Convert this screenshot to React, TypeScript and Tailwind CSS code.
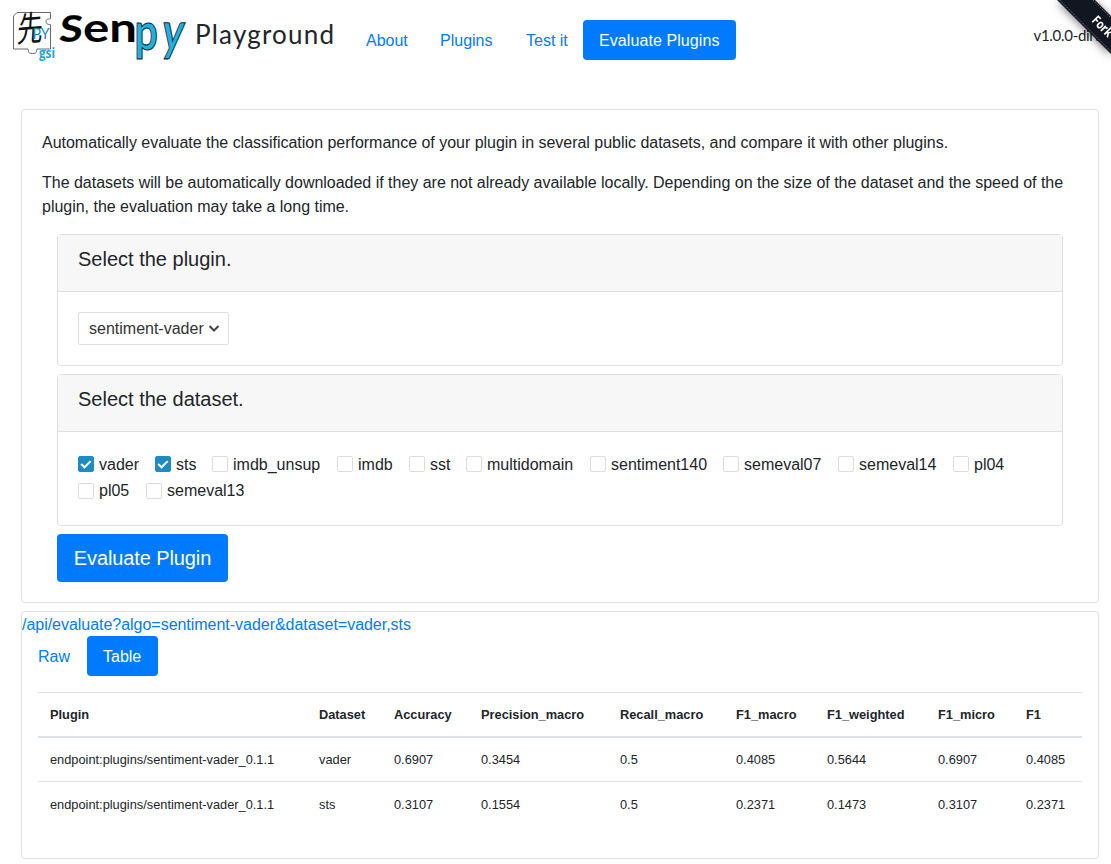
import React from "react";

const navItems = [
  { label: "About", width: "w-[74px]" },
  { label: "Plugins", width: "w-[86px]" },
  { label: "Test it", width: "w-[73px]" },
  { label: "Evaluate Plugins", width: "w-[153px]" },
];

const datasets = [
  { name: "vader", checked: true, width: "w-[61px]" },
  { name: "sts", checked: true, width: "w-[41px]" },
  { name: "imdb_unsup", checked: false, width: "w-[109px]" },
  { name: "imdb", checked: false, width: "w-[56px]" },
  { name: "sst", checked: false, width: "w-[41px]" },
  { name: "multidomain", checked: false, width: "w-[108px]" },
  { name: "sentiment140", checked: false, width: "w-[117px]" },
  { name: "semeval07", checked: false, width: "w-[99px]" },
  { name: "semeval14", checked: false, width: "w-[99px]" },
  { name: "pl04", checked: false, width: "w-[52px]" },
  { name: "pl05", checked: false, width: "w-[52px]" },
  { name: "semeval13", checked: false, width: "w-[99px]" },
];

const columns = [
  { label: "Plugin", width: "w-[269px]" },
  { label: "Dataset", width: "w-[75px]" },
  { label: "Accuracy", width: "w-[87px]" },
  { label: "Precision_macro", width: "w-[139px]" },
  { label: "Recall_macro", width: "w-[116px]" },
  { label: "F1_macro", width: "w-[91px]" },
  { label: "F1_weighted", width: "w-[111px]" },
  { label: "F1_micro", width: "w-[88px]" },
  { label: "F1", width: "w-[68px]" },
];

const rows = [
  ["endpoint:plugins/sentiment-vader_0.1.1", "vader", "0.6907", "0.3454", "0.5", "0.4085", "0.5644", "0.6907", "0.4085"],
  ["endpoint:plugins/sentiment-vader_0.1.1", "sts", "0.3107", "0.1554", "0.5", "0.2371", "0.1473", "0.3107", "0.2371"],
];

function Logo() {
  return (
    <svg className="h-[70px] w-[190px] shrink-0 overflow-visible" viewBox="0 0 190 70">
      <path
        d="M17 12.500H50.500V18.500C49 19.500 46 18.500 46 21.500S49 24.500 50.500 24.500V49H37C36 50.500 38 53.500 32.500 53.500S29 50.500 28 49H13.500V16Z"
        fill="none"
        stroke="#444"
        strokeWidth=".8"
      />
      <text fontSize="28" fontFamily="'Noto Sans CJK JP', sans-serif" fill="#111" transform="matrix(.92 -.07 -.07 1.240 16.500 42)">先</text>
      <text x="32.500" y="39" fontSize="16" fontFamily="Lato, sans-serif" textLength="17" lengthAdjust="spacingAndGlyphs" fill="#1b87b5">PY</text>
      <text x="39" y="58" fontSize="15" fontWeight="700" fontFamily="'Open Sans', sans-serif" textLength="16" lengthAdjust="spacingAndGlyphs" fill="#1ba5da">gsi</text>
      <g fontFamily="Lato, sans-serif" fontWeight="700">
        <text fontSize="36" fill="#000" stroke="#000" strokeWidth=".3" transform="matrix(1.170 -.05 -.1 1 58.500 42)">S</text>
        <text x="83" y="41.500" fontSize="41" textLength="54" lengthAdjust="spacingAndGlyphs" fill="#000">en</text>
        <g fill="#1fb0e6" stroke="#17242c" strokeWidth=".8">
          <text fontSize="40" transform="matrix(1.030 0 0 1.300 134.500 49.500)">p</text>
          <text fontSize="40" transform="matrix(1.020 0 -.16 1.330 160.500 50)">y</text>
        </g>
      </g>
    </svg>
  );
}

function Panel({ title, children, className }: { title: string; children: React.ReactNode; className: string }) {
  return (
    <section className={`mb-2 rounded-[4px] border border-[#dfdfdf] ${className}`}>
      <h2 className="h-[57px] border-b border-[#dfdfdf] bg-[#f7f7f7] px-5 pt-3 text-[20px] leading-6">{title}</h2>
      <div className="px-5">{children}</div>
    </section>
  );
}

export default function App() {
  return (
    <div className="relative h-[864px] overflow-hidden bg-white font-['Liberation_Sans',Arial,sans-serif] text-[16px] leading-6 text-[#212529]">
      <header className="flex h-[109px] items-start">
        <Logo />
        <h1 className="ml-[5px] mt-[18px] w-[155px] whitespace-nowrap font-[Lato] text-[26px] font-normal leading-8 tracking-[1.2px]">Playground</h1>
        <nav className="mt-5 flex">
          {navItems.map(({ label, width }, i) => (
            <a key={label} className={`h-10 whitespace-nowrap rounded-[4px] pl-4 pt-[9px] ${width} ${i === 3 ? "bg-[#007bff] tracking-[0.08px] text-white" : "text-[#007bff]"}`}>
              {label}
            </a>
          ))}
        </nav>
        <span className="ml-auto mr-[4px] mt-[23px] whitespace-nowrap font-[Lato] text-[15px] font-normal tracking-[-0.3px]">v1.0.0-dirty</span>
      </header>

      <svg className="absolute right-0 top-0 h-[60px] w-[70px] drop-shadow-[0_2px_4px_rgba(0,0,0,0.5)]" viewBox="0 0 70 60">
        <path d="M16 0H54L70 16V54Z" fill="#121621" />
        <path d="M18.500 0 70 51.500M52 0 70 18" stroke="#7b808a" strokeWidth=".8" strokeDasharray="1.500 1" />
        <text x="50" y="21" transform="rotate(45 50 21)" fontFamily="'Open Sans', sans-serif" fontSize="13" fontWeight="700" textLength="24" lengthAdjust="spacingAndGlyphs" fill="#fff">Fork</text>
      </svg>

      <main className="ml-[21px] mr-3">
        <section className="h-[494px] rounded-[4px] border border-[#dfdfdf] px-5 pt-[21px]">
          <p className="mb-4 tracking-[-0.022px]">Automatically evaluate the classification performance of your plugin in several public datasets, and compare it with other plugins.</p>
          <p className="mb-[15px] tracking-[-0.016px]">The datasets will be automatically downloaded if they are not already available locally. Depending on the size of the dataset and the speed of the plugin, the evaluation may take a long time.</p>
          <div className="px-[15px]">
            <Panel title="Select the plugin." className="h-[132px]">
              <button className="mt-5 flex h-[33px] w-[151px] items-center justify-between rounded-[2px] border border-[#dfdfdf] pl-[10px] pr-2 text-[#333]">
                sentiment-vader
                <svg className="h-2 w-3" viewBox="0 0 12 8" fill="none" stroke="#444" strokeWidth="2">
                  <path d="m1.500 1 4.500 4.500 4.500-4.500" />
                </svg>
              </button>
            </Panel>
            <Panel title="Select the dataset." className="h-[152px]">
              <div className="flex flex-wrap gap-x-4 pt-5">
                {datasets.map(({ name, checked, width }, i) => (
                  <label key={name} className={`flex h-[26px] items-center whitespace-nowrap ${width}`}>
                    <span className={`mr-[5px] flex size-4 shrink-0 items-center justify-center rounded-[2px] border ${i < 10 ? "mb-[2px]" : ""} ${checked ? "border-[#1e8bc3] bg-[#1e8bc3]" : "border-[#dcdcdc] bg-white"}`}>
                      {checked && (
                        <svg className="size-3" viewBox="0 0 12 12" fill="none" stroke="#fff" strokeWidth="2">
                          <path d="m1.200 6 3.300 3.300 6.200-6.200" />
                        </svg>
                      )}
                    </span>
                    {name}
                  </label>
                ))}
              </div>
            </Panel>
            <button className="h-12 w-[171px] rounded-[4px] bg-[#007bff] text-[20px] tracking-[-0.1px] text-white">Evaluate Plugin</button>
          </div>
        </section>

        <section className="mt-2 h-[248px] rounded-[4px] border border-[#dfdfdf]">
          <a className="block h-6 pt-px tracking-[-0.03px] text-[#007bff]">/api/evaluate?algo=sentiment-vader&amp;dataset=vader,sts</a>
          <div className="flex">
            <a className="h-10 w-[65px] pl-4 pt-[9px] text-[#007bff]">Raw</a>
            <a className="h-10 w-[71px] rounded-[4px] bg-[#007bff] pl-4 pt-[9px] text-white">Table</a>
          </div>
          <table className="ml-4 mt-4 w-[1044px] table-fixed border-separate border-spacing-0 text-left text-[12.8px] leading-5">
            <thead>
              <tr>
                {columns.map(({ label, width }) => (
                  <th key={label} className={`h-[46px] whitespace-nowrap border-b-2 border-t border-[#dee2e6] pl-3 font-bold ${width}`}>{label}</th>
                ))}
              </tr>
            </thead>
            <tbody>
              {rows.map((row, r) => (
                <tr key={row[1]}>
                  {row.map((cell, i) => (
                    <td key={i} className={`whitespace-nowrap border-[#dee2e6] pl-3 ${r === 0 ? "h-[44px] border-b" : "h-[45px]"}`}>{cell}</td>
                  ))}
                </tr>
              ))}
            </tbody>
          </table>
        </section>
      </main>
    </div>
  );
}
